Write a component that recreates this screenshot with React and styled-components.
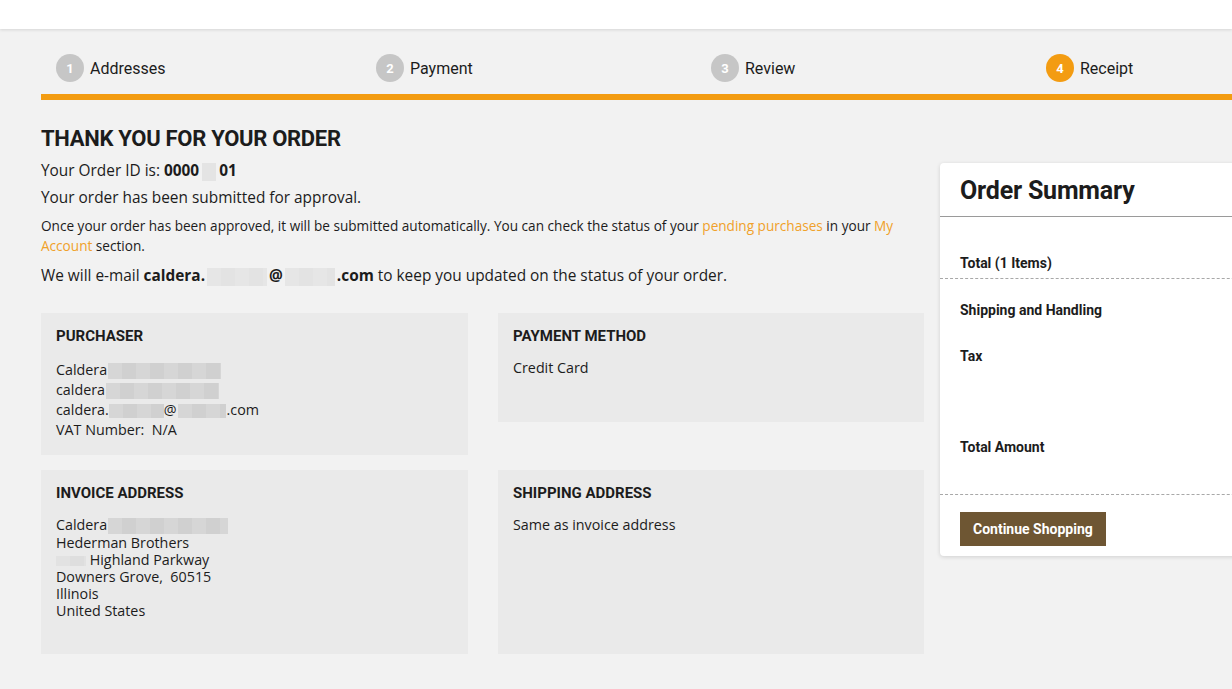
import React from "react";
import styled, { createGlobalStyle } from "styled-components";

const Global = createGlobalStyle`
  html, body { margin: 0; padding: 0; }
  body {
    background: #f2f2f2;
    font-family: "Open Sans", Roboto, "Liberation Sans", Arial, sans-serif;
    color: #1c1c1c;
    overflow: hidden;
    width: 1232px;
    height: 689px;
  }
  * { box-sizing: border-box; }
`;

const ORANGE = "#f39c12";
const HEAD_FONT = `Roboto, "Liberation Sans", Arial, sans-serif`;

const TopBar = styled.header`
  height: 29px;
  background: #fff;
  box-shadow: 0 1px 3px rgba(0, 0, 0, 0.12);
  position: relative;
  z-index: 1;
`;

const Page = styled.main`
  width: 1400px;
  padding-left: 41px;
`;

const Stepper = styled.nav`
  width: 1340px;
  margin-top: 25px;
  display: grid;
  grid-template-columns: 320px repeat(3, 335px);
  border-bottom: 6px solid ${ORANGE};
  padding-bottom: 12px;
`;

const Step = styled.div`
  display: flex;
  align-items: center;
  gap: 6px;
  padding-left: 15px;
  font-family: ${HEAD_FONT};
  font-size: 16px;
  color: #1c1c1c;
`;

const StepNum = styled.span`
  width: 28px;
  height: 28px;
  border-radius: 50%;
  background: ${(p) => (p.$active ? ORANGE : "#c6c6c6")};
  color: #fff;
  font-weight: 700;
  font-size: 13px;
  display: flex;
  align-items: center;
  justify-content: center;
`;

const Content = styled.div`
  display: flex;
  align-items: flex-start;
  gap: 16px;
`;

const MainCol = styled.section`
  width: 883px;
`;

const Title = styled.h1`
  margin: 26px 0 0;
  font-family: ${HEAD_FONT};
  font-size: 22px;
  line-height: 26px;
  font-weight: 700;
  letter-spacing: -0.3px;
`;

const Line = styled.p`
  margin: ${(p) => p.$mt}px 0 0;
  font-size: ${(p) => p.$size}px;
  line-height: ${(p) => p.$lh}px;
  padding-right: ${(p) => p.$pr || 0}px;
`;

const Link = styled.a`
  color: #f0a12a;
  text-decoration: none;
`;

const Blur = styled.span`
  display: inline-block;
  vertical-align: middle;
  width: ${(p) => p.$w}px;
  height: ${(p) => p.$h || 16}px;
  margin: 0 ${(p) => p.$mx ?? 1}px;
  background: repeating-linear-gradient(
    90deg,
    ${(p) => p.$c || "#d6d6d6"} 0 14px,
    ${(p) => p.$c2 || "#d0d0d0"} 14px 28px
  );
`;

const Cards = styled.div`
  margin-top: 26px;
  display: grid;
  grid-template-columns: 427px 426px;
  column-gap: 30px;
  row-gap: 15px;
  align-items: start;
`;

const Card = styled.div`
  background: #eaeaea;
  padding: 13px 15px 15px;
  min-height: ${(p) => p.$minH || 0}px;
`;

const CardTitle = styled.h3`
  margin: 0 0 ${(p) => p.$gap || 13}px;
  font-family: ${HEAD_FONT};
  font-size: 15px;
  line-height: 20px;
  font-weight: 700;
`;

const CardText = styled.div`
  font-size: 14.3px;
  line-height: ${(p) => p.$lh || 17}px;
`;

const Summary = styled.aside`
  width: 330px;
  margin-top: 63px;
  background: #fff;
  border-radius: 4px;
  box-shadow: 0 1px 4px rgba(0, 0, 0, 0.14);
  padding-bottom: 10px;
  font-family: ${HEAD_FONT};
`;

const SummaryHead = styled.h2`
  margin: 0;
  padding: 13px 20px 10px;
  font-size: 25px;
  line-height: 30px;
  font-weight: 700;
  letter-spacing: -0.2px;
  border-bottom: 1px solid #9a9a9a;
`;

const SummaryRow = styled.div`
  margin: ${(p) => p.$mt}px 20px 0;
  font-size: 14px;
  line-height: 20px;
  font-weight: 700;
`;

const Dashed = styled.div`
  margin-top: ${(p) => p.$mt}px;
  border-top: 1px dashed #a8a8a8;
`;

const ContinueButton = styled.button`
  margin: 17px 20px 0;
  height: 34px;
  padding: 0 13px;
  border: 0;
  background: #6e5633;
  color: #fff;
  font-family: inherit;
  font-size: 14px;
  font-weight: 700;
  cursor: pointer;
`;

const steps = ["Addresses", "Payment", "Review", "Receipt"];

export default function App() {
  return (
    <>
      <Global />
      <TopBar />
      <Page>
        <Stepper>
          {steps.map((s, i) => (
            <Step key={s}>
              <StepNum $active={i === 3}>{i + 1}</StepNum>
              {s}
            </Step>
          ))}
        </Stepper>

        <Content>
          <MainCol>
            <Title>THANK YOU FOR YOUR ORDER</Title>
            <Line $mt={8} $size={15.4} $lh={22}>
              Your Order ID is: <b>0000</b>
              <Blur $w={14} $h={18} $c="#e4e4e4" $c2="#e4e4e4" $mx={3} />
              <b>01</b>
            </Line>
            <Line $mt={5} $size={15.4} $lh={22}>
              Your order has been submitted for approval.
            </Line>
            <Line $mt={7} $size={13.6} $lh={20} $pr={20}>
              Once your order has been approved, it will be submitted automatically. You can check the status of
              your <Link href="#">pending purchases</Link> in your <Link href="#">My Account</Link> section.
            </Line>
            <Line $mt={9} $size={15.4} $lh={22}>
              We will e-mail <b>caldera.</b>
              <Blur $w={60} $h={18} $c="#e6e6e6" $c2="#e3e3e3" $mx={2} />
              <b>@</b>
              <Blur $w={50} $h={18} $c="#e6e6e6" $c2="#e3e3e3" $mx={2} />
              <b>.com</b> to keep you updated on the status of your order.
            </Line>

            <Cards>
              <Card>
                <CardTitle $gap={14}>PURCHASER</CardTitle>
                <CardText $lh={20}>
                  <div>
                    Caldera
                    <Blur $w={113} />
                  </div>
                  <div>
                    caldera
                    <Blur $w={113} />
                  </div>
                  <div>
                    caldera.
                    <Blur $w={55} $h={14} $mx={0} />@
                    <Blur $w={48} $h={14} $mx={1} />
                    .com
                  </div>
                  <div>VAT Number:&nbsp; N/A</div>
                </CardText>
              </Card>
              <Card $minH={109}>
                <CardTitle>PAYMENT METHOD</CardTitle>
                <CardText>Credit Card</CardText>
              </Card>
              <Card $minH={184}>
                <CardTitle>INVOICE ADDRESS</CardTitle>
                <CardText>
                  <div>
                    Caldera
                    <Blur $w={120} />
                  </div>
                  <div>Hederman Brothers</div>
                  <div>
                    <Blur $w={30} $h={10} $mx={0} $c="#e2e2e2" $c2="#dedede" /> Highland Parkway
                  </div>
                  <div>Downers Grove,&nbsp; 60515</div>
                  <div>Illinois</div>
                  <div>United States</div>
                </CardText>
              </Card>
              <Card $minH={184}>
                <CardTitle>SHIPPING ADDRESS</CardTitle>
                <CardText>Same as invoice address</CardText>
              </Card>
            </Cards>
          </MainCol>

          <Summary>
            <SummaryHead>Order Summary</SummaryHead>
            <SummaryRow $mt={36}>Total (1 Items)</SummaryRow>
            <Dashed $mt={5} />
            <SummaryRow $mt={21}>Shipping and Handling</SummaryRow>
            <SummaryRow $mt={26}>Tax</SummaryRow>
            <SummaryRow $mt={71}>Total Amount</SummaryRow>
            <Dashed $mt={37} />
            <ContinueButton>Continue Shopping</ContinueButton>
          </Summary>
        </Content>
      </Page>
    </>
  );
}
